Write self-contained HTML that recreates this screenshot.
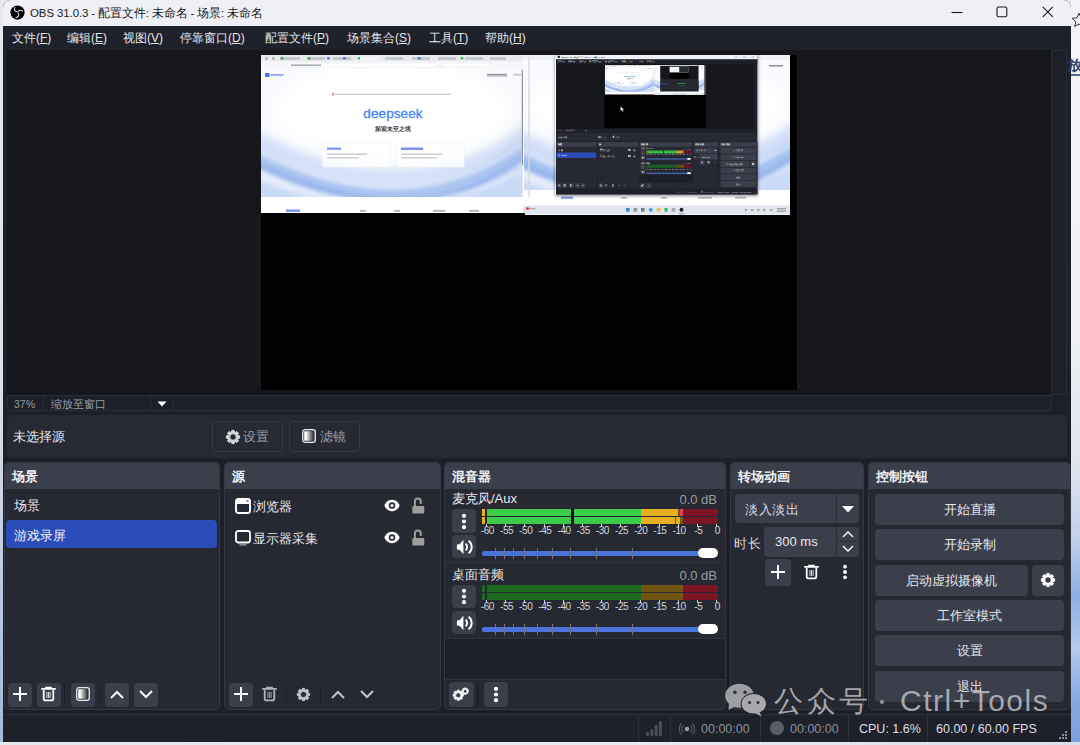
<!DOCTYPE html>
<html><head><meta charset="utf-8">
<style>
*{box-sizing:border-box;margin:0;padding:0}
html,body{width:1080px;height:745px;overflow:hidden;background:linear-gradient(180deg,#e6e8ec 0,#dde2ea 50%,#b9c8de 80%,#a3b8d8 100%);font-family:"Liberation Sans",sans-serif}
.a{position:absolute}
.t{position:absolute;white-space:nowrap}
#deskR{left:1071px;top:0;width:9px;height:745px;background:linear-gradient(180deg,#f4f5f8 0,#eef0f4 45%,#dfe5ee 62%,#c3d2ea 72%,#8eaee2 80%,#b5caec 87%,#86a8e2 94%,#7d9fdd 100%)}
#winbg{left:3px;top:0;width:1068px;height:742px;background:#1e2029;border-radius:8px 8px 3px 3px}
#title{left:3px;top:0;width:1068px;height:26px;background:#eff0f5;border-radius:8px 8px 0 0;color:#1b1b1b;font-size:11.5px}
#menu{left:3px;top:26px;width:1067px;height:23px;background:#1f212a;color:#e4e4ea;font-size:12px}
#menu span{position:absolute;top:4px;white-space:nowrap}
#preview{left:7px;top:50px;width:1044px;height:345px;background:#16171c}
#vscroll{left:1051px;top:50px;width:16px;height:345px;background:#1e2029;border:1px solid #2a2d37}
#zoomrow{left:7px;top:395px;width:1044px;height:16px;border:1px solid #2a2d37;color:#9a9ca6;font-size:10.5px}
#srcbar{left:7px;top:415px;width:1060px;height:43px;background:#272a33;border-radius:6px}
.dock{position:absolute;top:462px;height:248px;background:#262832;border-radius:5px;overflow:hidden;border:1px solid #353844}
.hdr{position:absolute;left:0;top:0;right:0;height:26px;background:#3b3e4b;color:#f2f2f4;font-size:13px;font-weight:bold}
.hdr span{position:absolute;left:7px;top:5px}
.btn{position:absolute;background:#3b3e4b;border-radius:4px}
.cbtn{position:absolute;width:189px;height:31px;background:#3b3e4b;border-radius:4px;color:#e6e6ea;font-size:12.5px;text-align:center;line-height:32px}
#status{left:3px;top:714px;width:1068px;height:28px;background:#1f212a;border-top:1px solid #2e313b;color:#8c8f9a;font-size:12.5px}
.sep{position:absolute;top:0;width:1px;height:28px;background:#2e313b}
.ic{color:#fff}
.lt{color:#e6e6ea;font-size:13px}
.sc{color:#d4d5da;font-size:10px;width:40px;text-align:center;letter-spacing:-0.4px}
.db{color:#9a9ca6;font-size:13px}
.wm{color:rgba(214,214,218,0.72)}
</style></head><body>
<svg width="0" height="0" style="position:absolute">
<defs>
<symbol id="plus" viewBox="0 0 14 14"><path d="M7 0v14M0 7h14" stroke="currentColor" stroke-width="2" fill="none"/></symbol>
<symbol id="trash" viewBox="0 0 16 16"><path d="M1 2.6h14" stroke="currentColor" stroke-width="1.9" fill="none" stroke-linecap="round"/><path d="M5.3 2.2V1h5.4v1.2" stroke="currentColor" stroke-width="1.6" fill="none"/><path d="M2.9 3.6v9.1a2.2 2.2 0 0 0 2.2 2.2h5.8a2.2 2.2 0 0 0 2.2-2.2V3.6" stroke="currentColor" stroke-width="1.9" fill="none"/><path d="M6.3 5.8v6.4M8 5.8v6.4M9.7 5.8v6.4" stroke="currentColor" stroke-width="0.9" fill="none"/></symbol>
<linearGradient id="fg" x1="0" x2="1" y1="0" y2="0"><stop offset="0.18" stop-color="#fff"/><stop offset="0.45" stop-color="#bbb"/><stop offset="1" stop-color="#2a2a2a"/></linearGradient>
<symbol id="filt" viewBox="0 0 14 14"><rect x="0.7" y="0.7" width="12.6" height="12.6" rx="2.2" fill="#3b3e4b" stroke="#e8e8e8" stroke-width="1.3"/><rect x="2.2" y="2.2" width="9.6" height="9.6" rx="0.8" fill="url(#fg)"/></symbol>
<symbol id="up" viewBox="0 0 14 9"><path d="M1 8L7 2l6 6" stroke="currentColor" stroke-width="2" fill="none"/></symbol>
<symbol id="down" viewBox="0 0 14 9"><path d="M1 1l6 6 6-6" stroke="currentColor" stroke-width="2" fill="none"/></symbol>
<symbol id="gear" viewBox="0 0 16 16"><path fill="currentColor" fill-rule="evenodd" stroke="currentColor" stroke-width="1" stroke-linejoin="round" d="M12.71 6.33 L14.60 6.87 L14.60 9.13 L12.71 9.67 L12.51 10.15 L13.47 11.87 L11.87 13.47 L10.15 12.51 L9.67 12.71 L9.13 14.60 L6.87 14.60 L6.33 12.71 L5.85 12.51 L4.13 13.47 L2.53 11.87 L3.49 10.15 L3.29 9.67 L1.40 9.13 L1.40 6.87 L3.29 6.33 L3.49 5.85 L2.53 4.13 L4.13 2.53 L5.85 3.49 L6.33 3.29 L6.87 1.40 L9.13 1.40 L9.67 3.29 L10.15 3.49 L11.87 2.53 L13.47 4.13 L12.51 5.85ZM11.3 8a3.3 3.3 0 1 0 -6.6 0a3.3 3.3 0 1 0 6.6 0z"/></symbol>
<symbol id="eye" viewBox="0 0 16 13"><path d="M8 0.8C4 0.8 1.3 3.8 0.4 6.5 1.3 9.2 4 12.2 8 12.2s6.7-3 7.6-5.7C14.7 3.8 12 0.8 8 0.8z" fill="currentColor"/><circle cx="8" cy="6.5" r="3.2" fill="#262832"/><circle cx="8" cy="6.5" r="1.6" fill="currentColor"/></symbol>
<symbol id="lock" viewBox="0 0 13 17"><rect x="0.3" y="9" width="12" height="7.5" rx="1" fill="currentColor"/><path d="M2.9 10V4.4a2.95 2.95 0 0 1 5.9 0V7" stroke="currentColor" stroke-width="2" fill="none"/></symbol>
<symbol id="dots" viewBox="0 0 6 18"><circle cx="3" cy="3" r="2.2" fill="currentColor"/><circle cx="3" cy="9" r="2.2" fill="currentColor"/><circle cx="3" cy="15" r="2.2" fill="currentColor"/></symbol>
<symbol id="spk" viewBox="0 0 17 16"><path d="M1.3 5.2Q0.2 8 1.3 10.8H3.6L7.4 15.2V0.8L3.6 5.2z" fill="currentColor"/><path d="M9.6 4.6a4.6 4.6 0 0 1 0 6.8" stroke="currentColor" stroke-width="1.9" fill="none"/><path d="M12.6 1.8a7.8 7.8 0 0 1 0 12.4" stroke="currentColor" stroke-width="1.9" fill="none"/></symbol>
<symbol id="brow" viewBox="0 0 16 16"><rect x="1" y="1" width="14" height="14" rx="2.2" fill="none" stroke="currentColor" stroke-width="1.9"/><rect x="1" y="1" width="14" height="5" rx="1.5" fill="currentColor"/><path d="M11.3 1.6l2.2 2.4M13.5 1.6l-2.2 2.4" stroke="#555" stroke-width="0.8"/></symbol>
<symbol id="mon" viewBox="0 0 16 16"><rect x="1" y="1" width="14" height="11.5" rx="2.2" fill="none" stroke="currentColor" stroke-width="1.8"/><path d="M4.5 14.9h7" stroke="currentColor" stroke-width="0.9" opacity=".85"/></symbol>
</defs></svg>
<div id="deskR" class="a"></div>
<div id="winbg" class="a"></div>

<div id="title" class="a">
  <svg class="a" style="left:7px;top:5px" width="15" height="15" viewBox="0 0 16 16"><circle cx="8" cy="8" r="7.6" fill="#000"/><g fill="none" stroke="#e8e8e8" stroke-width="1.1" stroke-linecap="round"><path d="M5.2 2.6a3 3 0 0 0 2.2 4.6"/><path d="M13.3 6.6a3 3 0 0 0-5 .9"/><path d="M6.3 13.4a3 3 0 0 0 2.4-4.8"/></g></svg>
  <svg class="a" style="left:948px;top:6px" width="14" height="14"><path d="M0.5 6.5h11" stroke="#1b1b1b" stroke-width="1.1"/></svg>
  <svg class="a" style="left:993px;top:6px" width="12" height="12"><rect x="1" y="1" width="9.8" height="9.8" rx="1.6" fill="none" stroke="#1b1b1b" stroke-width="1.1"/></svg>
  <svg class="a" style="left:1039px;top:6px" width="12" height="12"><path d="M0.8 0.8l10 10M10.8 0.8l-10 10" stroke="#1b1b1b" stroke-width="1.1"/></svg>
  <span class="t" style="left:27px;top:6px;letter-spacing:-0.12px">OBS 31.0.3 - 配置文件: 未命名 - 场景: 未命名</span>
</div>
<div id="menu" class="a">
  <span style="left:9px">文件(<u>F</u>)</span>
  <span style="left:64px">编辑(<u>E</u>)</span>
  <span style="left:120px">视图(<u>V</u>)</span>
  <span style="left:177px">停靠窗口(<u>D</u>)</span>
  <span style="left:262px">配置文件(<u>P</u>)</span>
  <span style="left:344px">场景集合(<u>S</u>)</span>
  <span style="left:426px">工具(<u>T</u>)</span>
  <span style="left:482px">帮助(<u>H</u>)</span>
</div>

<div id="preview" class="a">
  <div id="shot" class="a" style="left:254px;top:5px;width:536px;height:335px;background:#000;overflow:hidden"><svg class="a" style="left:0;top:0" width="536" height="160" viewBox="0 0 536 160">
<defs>
<filter id="b2" x="-10%" y="-50%" width="120%" height="200%"><feGaussianBlur stdDeviation="2"/></filter>
<filter id="b4" x="-10%" y="-50%" width="120%" height="200%"><feGaussianBlur stdDeviation="4"/></filter>
<filter id="b8" x="-20%" y="-50%" width="140%" height="200%"><feGaussianBlur stdDeviation="9"/></filter>
<clipPath id="cpL"><rect x="0" y="13.5" width="262" height="128.5"/></clipPath>
<clipPath id="cpR"><rect x="263" y="5" width="266" height="130"/></clipPath>
</defs>
<!-- left browser -->
<rect x="0" y="0" width="264" height="158" fill="#fff"/>
<rect x="0" y="0" width="264" height="6.6" fill="#e8eaee"/>
<g fill="#b9bcc4"><rect x="4" y="2" width="3" height="3"/><rect x="11" y="2" width="3" height="3"/></g>
<g fill="#c5c8cf"><rect x="19" y="2" width="20" height="3"/><rect x="46" y="2" width="18" height="3"/><rect x="72" y="2" width="18" height="3"/><rect x="99" y="1.5" width="20" height="4" fill="#f4f5f8"/><rect x="124" y="2" width="18" height="3"/><rect x="151" y="2" width="18" height="3"/><rect x="177" y="2" width="18" height="3"/><rect x="204" y="2" width="18" height="3"/><rect x="229" y="2" width="16" height="3"/></g>
<g fill="#39b54a"><circle cx="21" cy="3.3" r="1.4"/><circle cx="48" cy="3.3" r="1.4"/><circle cx="98" cy="3.3" r="1.2"/><circle cx="201" cy="3.3" r="1.4"/></g>
<g fill="#4c6bf0"><rect x="66" y="2.3" width="3" height="2"/><rect x="82" y="2.3" width="3" height="2"/><rect x="157" y="2" width="2.5" height="2.5"/></g>
<rect x="0" y="6.6" width="264" height="7" fill="#f6f7f9"/>
<rect x="26" y="8" width="150" height="4.2" rx="2" fill="#fff" stroke="#e2e4e8" stroke-width="0.5"/>
<rect x="30" y="9.5" width="30" height="1.4" fill="#9aa0ac"/>
<rect x="180" y="8" width="50" height="4.2" rx="2" fill="#fff" stroke="#e2e4e8" stroke-width="0.5"/>
<g clip-path="url(#cpL)">
<rect x="0" y="13.5" width="262" height="128.5" fill="#f8fafe"/>
<path d="M-10 118 Q150 190 272 100 L272 150 L-10 150Z" fill="#c9daf6" filter="url(#b4)"/>
<path d="M-10 82 Q150 165 272 72" stroke="#d3e1f8" stroke-width="16" fill="none" filter="url(#b4)"/>
<path d="M-10 100 Q150 185 272 88" stroke="#a9c3f0" stroke-width="16" fill="none" filter="url(#b4)"/>
<path d="M-10 106 Q160 190 272 94" stroke="#8aace9" stroke-width="5" fill="none" filter="url(#b2)" opacity=".8"/>
<path d="M-10 93 Q150 176 272 82" stroke="#fff" stroke-width="2" fill="none" filter="url(#b2)" opacity=".7"/>
<path d="M-10 120 Q150 180 272 110" stroke="#fff" stroke-width="3" fill="none" filter="url(#b2)" opacity=".4"/>
<ellipse cx="131" cy="55" rx="120" ry="50" fill="#fff" filter="url(#b8)" opacity=".95"/>
</g>
<rect x="260.5" y="13.5" width="2" height="128" fill="#e4e6ea"/>
<rect x="260.8" y="15" width="1.4" height="95" fill="#8e929a"/>
<g fill="#4f6cf0"><rect x="4" y="18" width="4.5" height="4"/><rect x="9.5" y="19" width="13" height="1.8" opacity=".6"/></g>
<rect x="226" y="18.8" width="20" height="1.8" fill="#555" opacity=".6"/><rect x="226" y="21" width="20" height="0.5" fill="#555" opacity=".5"/>
<rect x="252" y="18.8" width="8" height="1.8" fill="#999" opacity=".5"/>
<rect x="74" y="38.6" width="116" height="1.5" fill="#8a8f9c" opacity=".4"/>
<rect x="71" y="38" width="2" height="2.5" fill="#e25a4a" opacity=".7"/>
<text x="132" y="63" text-anchor="middle" font-family="Liberation Sans" font-size="13.5" fill="#3d86f5" stroke="#3d86f5" stroke-width="0.3" letter-spacing="0.1">deepseek</text>
<text x="132" y="75.5" text-anchor="middle" font-size="6.4" font-weight="bold" fill="#2c3039" opacity=".95">探索未至之境</text>
<g>
<rect x="61" y="87.7" width="68" height="24.7" rx="3" fill="#fff" opacity=".8" stroke="#e3e9f5" stroke-width=".6"/>
<rect x="135" y="87.7" width="68.5" height="24.7" rx="3" fill="#fff" opacity=".8" stroke="#e3e9f5" stroke-width=".6"/>
<rect x="66" y="92.6" width="14" height="2.2" fill="#5470ee" opacity=".75"/>
<rect x="140" y="92.5" width="22" height="2.4" fill="#5470ee" opacity=".8"/>
<rect x="66" y="98.6" width="40" height="1.2" fill="#7a7f8c" opacity=".45"/><rect x="66" y="102.2" width="32" height="1.2" fill="#7a7f8c" opacity=".45"/>
<rect x="140" y="98.6" width="42" height="1.2" fill="#7a7f8c" opacity=".45"/><rect x="140" y="102.2" width="36" height="1.2" fill="#7a7f8c" opacity=".45"/>
</g>
<g fill="#6d7280" opacity=".6"><rect x="99" y="155" width="6" height="1.6"/><rect x="133" y="155" width="6" height="1.6"/><rect x="172" y="155" width="12" height="1.6"/><rect x="208" y="155" width="10" height="1.6"/></g>
<rect x="25" y="154.5" width="14" height="2.4" fill="#4f6cf0" opacity=".75"/>
<!-- right screenshot -->
<rect x="262" y="-1" width="274" height="161" fill="#fff"/>
<rect x="262" y="-1" width="268" height="6" fill="#eef0f3"/>
<rect x="262" y="5" width="268" height="4" fill="#f8f9fb"/>
<g clip-path="url(#cpR)">
<rect x="263" y="5" width="266" height="130" fill="#f8fafe"/>
<path d="M250 118 Q410 190 545 100 L545 150 L250 150Z" fill="#c9daf6" filter="url(#b4)"/>
<path d="M250 80 Q410 165 545 68" stroke="#cfdef8" stroke-width="16" fill="none" filter="url(#b4)"/>
<path d="M250 98 Q410 185 545 86" stroke="#a3bff0" stroke-width="16" fill="none" filter="url(#b4)"/>
<path d="M250 104 Q420 190 545 92" stroke="#86a9e8" stroke-width="5" fill="none" filter="url(#b2)" opacity=".8"/>
<path d="M250 90 Q410 176 545 80" stroke="#fff" stroke-width="2" fill="none" filter="url(#b2)" opacity=".7"/>
<ellipse cx="396" cy="50" rx="130" ry="45" fill="#fff" filter="url(#b8)"/>
</g>
<rect x="263" y="135" width="266" height="15" fill="#fff"/>
<rect x="267" y="2" width="2" height="140" fill="#d6d9df" opacity=".7"/>
<g fill="#6d7280" opacity=".55"><rect x="360" y="142" width="6" height="1.5"/><rect x="400" y="142" width="6" height="1.5"/><rect x="437" y="142" width="14" height="1.5"/><rect x="474" y="142" width="11" height="1.5"/></g>
<rect x="300" y="141.6" width="12" height="2.2" fill="#4f6cf0" opacity=".7"/>
<rect x="508" y="10" width="14" height="1.6" fill="#555" opacity=".6"/>
<rect x="262" y="150.5" width="268" height="9" fill="#e1e6ef"/>
<g>
<rect x="365" y="153" width="3.6" height="3.6" fill="#3a86dc"/>
<rect x="372.5" y="153" width="3.6" height="3.6" fill="#5c606a" opacity=".6"/>
<rect x="380" y="153" width="3.6" height="3.6" fill="#33363e" opacity=".6"/>
<circle cx="389.8" cy="154.8" r="1.9" fill="#2aa0e0"/>
<rect x="395.8" y="153.2" width="3.8" height="3.2" fill="#f0bd3a"/>
<rect x="403.5" y="153" width="3" height="3.6" fill="#36b552"/>
<rect x="410.8" y="153" width="3.4" height="3.6" fill="#667" opacity=".5"/>
<circle cx="420.5" cy="154.8" r="2" fill="#222"/>
<rect x="418" y="158.4" width="5" height="0.8" fill="#5b8ee8"/>
</g>
<g fill="#666" opacity=".5"><rect x="484" y="154" width="2" height="2"/><rect x="490" y="154" width="2.5" height="2"/><rect x="496" y="154" width="2.5" height="2"/><rect x="502" y="154" width="2.5" height="2"/><rect x="509" y="154" width="2.5" height="2"/><rect x="516" y="153" width="9" height="1.5"/><rect x="516" y="155.5" width="9" height="1.5"/></g>
<circle cx="266.5" cy="153.5" r="1.6" fill="#e0483f"/>
<rect x="268.5" y="153" width="6" height="1.4" fill="#777" opacity=".5"/>
<rect x="0" y="158" width="264" height="2" fill="#000"/>
<rect x="529" y="-1" width="7" height="161" fill="#000"/>
</svg>
<div class="a" style="left:0;top:160px;width:536px;height:180px;background:#000"></div>
<div class="a" style="left:294px;top:-1px;width:203px;height:141px;box-shadow:0 1px 3px rgba(0,0,0,.45)"></div>
<div class="a" style="left:0;top:0;width:1080px;height:745px;transform:translate(295px,-0.5px) scale(0.18866) translate(-3px,0);transform-origin:0 0"><div id="winbg" class="a"></div>

<div id="title" class="a">
  <svg class="a" style="left:7px;top:5px" width="15" height="15" viewBox="0 0 16 16"><circle cx="8" cy="8" r="7.6" fill="#000"/><g fill="none" stroke="#e8e8e8" stroke-width="1.1" stroke-linecap="round"><path d="M5.2 2.6a3 3 0 0 0 2.2 4.6"/><path d="M13.3 6.6a3 3 0 0 0-5 .9"/><path d="M6.3 13.4a3 3 0 0 0 2.4-4.8"/></g></svg>
  <svg class="a" style="left:948px;top:6px" width="14" height="14"><path d="M0.5 6.5h11" stroke="#1b1b1b" stroke-width="1.1"/></svg>
  <svg class="a" style="left:993px;top:6px" width="12" height="12"><rect x="1" y="1" width="9.8" height="9.8" rx="1.6" fill="none" stroke="#1b1b1b" stroke-width="1.1"/></svg>
  <svg class="a" style="left:1039px;top:6px" width="12" height="12"><path d="M0.8 0.8l10 10M10.8 0.8l-10 10" stroke="#1b1b1b" stroke-width="1.1"/></svg>
  <span class="t" style="left:27px;top:6px;letter-spacing:-0.12px">OBS 31.0.3 - 配置文件: 未命名 - 场景: 未命名</span>
</div>
<div id="menu" class="a">
  <span style="left:9px">文件(<u>F</u>)</span>
  <span style="left:64px">编辑(<u>E</u>)</span>
  <span style="left:120px">视图(<u>V</u>)</span>
  <span style="left:177px">停靠窗口(<u>D</u>)</span>
  <span style="left:262px">配置文件(<u>P</u>)</span>
  <span style="left:344px">场景集合(<u>S</u>)</span>
  <span style="left:426px">工具(<u>T</u>)</span>
  <span style="left:482px">帮助(<u>H</u>)</span>
</div>

<div id="preview" class="a">
  <div id="shot" class="a" style="left:254px;top:5px;width:536px;height:335px;background:#000;overflow:hidden"><svg class="a" style="left:0;top:0" width="536" height="160" viewBox="0 0 536 160">
<defs>
<filter id="b2" x="-10%" y="-50%" width="120%" height="200%"><feGaussianBlur stdDeviation="2"/></filter>
<filter id="b4" x="-10%" y="-50%" width="120%" height="200%"><feGaussianBlur stdDeviation="4"/></filter>
<filter id="b8" x="-20%" y="-50%" width="140%" height="200%"><feGaussianBlur stdDeviation="9"/></filter>
<clipPath id="cpL"><rect x="0" y="13.5" width="262" height="128.5"/></clipPath>
<clipPath id="cpR"><rect x="263" y="5" width="266" height="130"/></clipPath>
</defs>
<!-- left browser -->
<rect x="0" y="0" width="264" height="158" fill="#fff"/>
<rect x="0" y="0" width="264" height="6.6" fill="#e8eaee"/>
<g fill="#b9bcc4"><rect x="4" y="2" width="3" height="3"/><rect x="11" y="2" width="3" height="3"/></g>
<g fill="#c5c8cf"><rect x="19" y="2" width="20" height="3"/><rect x="46" y="2" width="18" height="3"/><rect x="72" y="2" width="18" height="3"/><rect x="99" y="1.5" width="20" height="4" fill="#f4f5f8"/><rect x="124" y="2" width="18" height="3"/><rect x="151" y="2" width="18" height="3"/><rect x="177" y="2" width="18" height="3"/><rect x="204" y="2" width="18" height="3"/><rect x="229" y="2" width="16" height="3"/></g>
<g fill="#39b54a"><circle cx="21" cy="3.3" r="1.4"/><circle cx="48" cy="3.3" r="1.4"/><circle cx="98" cy="3.3" r="1.2"/><circle cx="201" cy="3.3" r="1.4"/></g>
<g fill="#4c6bf0"><rect x="66" y="2.3" width="3" height="2"/><rect x="82" y="2.3" width="3" height="2"/><rect x="157" y="2" width="2.5" height="2.5"/></g>
<rect x="0" y="6.6" width="264" height="7" fill="#f6f7f9"/>
<rect x="26" y="8" width="150" height="4.2" rx="2" fill="#fff" stroke="#e2e4e8" stroke-width="0.5"/>
<rect x="30" y="9.5" width="30" height="1.4" fill="#9aa0ac"/>
<rect x="180" y="8" width="50" height="4.2" rx="2" fill="#fff" stroke="#e2e4e8" stroke-width="0.5"/>
<g clip-path="url(#cpL)">
<rect x="0" y="13.5" width="262" height="128.5" fill="#f8fafe"/>
<path d="M-10 118 Q150 190 272 100 L272 150 L-10 150Z" fill="#c9daf6" filter="url(#b4)"/>
<path d="M-10 82 Q150 165 272 72" stroke="#d3e1f8" stroke-width="16" fill="none" filter="url(#b4)"/>
<path d="M-10 100 Q150 185 272 88" stroke="#a9c3f0" stroke-width="16" fill="none" filter="url(#b4)"/>
<path d="M-10 106 Q160 190 272 94" stroke="#8aace9" stroke-width="5" fill="none" filter="url(#b2)" opacity=".8"/>
<path d="M-10 93 Q150 176 272 82" stroke="#fff" stroke-width="2" fill="none" filter="url(#b2)" opacity=".7"/>
<path d="M-10 120 Q150 180 272 110" stroke="#fff" stroke-width="3" fill="none" filter="url(#b2)" opacity=".4"/>
<ellipse cx="131" cy="55" rx="120" ry="50" fill="#fff" filter="url(#b8)" opacity=".95"/>
</g>
<rect x="260.5" y="13.5" width="2" height="128" fill="#e4e6ea"/>
<rect x="260.8" y="15" width="1.4" height="95" fill="#8e929a"/>
<g fill="#4f6cf0"><rect x="4" y="18" width="4.5" height="4"/><rect x="9.5" y="19" width="13" height="1.8" opacity=".6"/></g>
<rect x="226" y="18.8" width="20" height="1.8" fill="#555" opacity=".6"/><rect x="226" y="21" width="20" height="0.5" fill="#555" opacity=".5"/>
<rect x="252" y="18.8" width="8" height="1.8" fill="#999" opacity=".5"/>
<rect x="74" y="38.6" width="116" height="1.5" fill="#8a8f9c" opacity=".4"/>
<rect x="71" y="38" width="2" height="2.5" fill="#e25a4a" opacity=".7"/>
<text x="132" y="63" text-anchor="middle" font-family="Liberation Sans" font-size="13.5" fill="#3d86f5" stroke="#3d86f5" stroke-width="0.3" letter-spacing="0.1">deepseek</text>
<text x="132" y="75.5" text-anchor="middle" font-size="6.4" font-weight="bold" fill="#2c3039" opacity=".95">探索未至之境</text>
<g>
<rect x="61" y="87.7" width="68" height="24.7" rx="3" fill="#fff" opacity=".8" stroke="#e3e9f5" stroke-width=".6"/>
<rect x="135" y="87.7" width="68.5" height="24.7" rx="3" fill="#fff" opacity=".8" stroke="#e3e9f5" stroke-width=".6"/>
<rect x="66" y="92.6" width="14" height="2.2" fill="#5470ee" opacity=".75"/>
<rect x="140" y="92.5" width="22" height="2.4" fill="#5470ee" opacity=".8"/>
<rect x="66" y="98.6" width="40" height="1.2" fill="#7a7f8c" opacity=".45"/><rect x="66" y="102.2" width="32" height="1.2" fill="#7a7f8c" opacity=".45"/>
<rect x="140" y="98.6" width="42" height="1.2" fill="#7a7f8c" opacity=".45"/><rect x="140" y="102.2" width="36" height="1.2" fill="#7a7f8c" opacity=".45"/>
</g>
<g fill="#6d7280" opacity=".6"><rect x="99" y="155" width="6" height="1.6"/><rect x="133" y="155" width="6" height="1.6"/><rect x="172" y="155" width="12" height="1.6"/><rect x="208" y="155" width="10" height="1.6"/></g>
<rect x="25" y="154.5" width="14" height="2.4" fill="#4f6cf0" opacity=".75"/>
<!-- right screenshot -->
<rect x="262" y="-1" width="274" height="161" fill="#fff"/>
<rect x="262" y="-1" width="268" height="6" fill="#eef0f3"/>
<rect x="262" y="5" width="268" height="4" fill="#f8f9fb"/>
<g clip-path="url(#cpR)">
<rect x="263" y="5" width="266" height="130" fill="#f8fafe"/>
<path d="M250 118 Q410 190 545 100 L545 150 L250 150Z" fill="#c9daf6" filter="url(#b4)"/>
<path d="M250 80 Q410 165 545 68" stroke="#cfdef8" stroke-width="16" fill="none" filter="url(#b4)"/>
<path d="M250 98 Q410 185 545 86" stroke="#a3bff0" stroke-width="16" fill="none" filter="url(#b4)"/>
<path d="M250 104 Q420 190 545 92" stroke="#86a9e8" stroke-width="5" fill="none" filter="url(#b2)" opacity=".8"/>
<path d="M250 90 Q410 176 545 80" stroke="#fff" stroke-width="2" fill="none" filter="url(#b2)" opacity=".7"/>
<ellipse cx="396" cy="50" rx="130" ry="45" fill="#fff" filter="url(#b8)"/>
</g>
<rect x="263" y="135" width="266" height="15" fill="#fff"/>
<rect x="267" y="2" width="2" height="140" fill="#d6d9df" opacity=".7"/>
<g fill="#6d7280" opacity=".55"><rect x="360" y="142" width="6" height="1.5"/><rect x="400" y="142" width="6" height="1.5"/><rect x="437" y="142" width="14" height="1.5"/><rect x="474" y="142" width="11" height="1.5"/></g>
<rect x="300" y="141.6" width="12" height="2.2" fill="#4f6cf0" opacity=".7"/>
<rect x="508" y="10" width="14" height="1.6" fill="#555" opacity=".6"/>
<rect x="262" y="150.5" width="268" height="9" fill="#e1e6ef"/>
<g>
<rect x="365" y="153" width="3.6" height="3.6" fill="#3a86dc"/>
<rect x="372.5" y="153" width="3.6" height="3.6" fill="#5c606a" opacity=".6"/>
<rect x="380" y="153" width="3.6" height="3.6" fill="#33363e" opacity=".6"/>
<circle cx="389.8" cy="154.8" r="1.9" fill="#2aa0e0"/>
<rect x="395.8" y="153.2" width="3.8" height="3.2" fill="#f0bd3a"/>
<rect x="403.5" y="153" width="3" height="3.6" fill="#36b552"/>
<rect x="410.8" y="153" width="3.4" height="3.6" fill="#667" opacity=".5"/>
<circle cx="420.5" cy="154.8" r="2" fill="#222"/>
<rect x="418" y="158.4" width="5" height="0.8" fill="#5b8ee8"/>
</g>
<g fill="#666" opacity=".5"><rect x="484" y="154" width="2" height="2"/><rect x="490" y="154" width="2.5" height="2"/><rect x="496" y="154" width="2.5" height="2"/><rect x="502" y="154" width="2.5" height="2"/><rect x="509" y="154" width="2.5" height="2"/><rect x="516" y="153" width="9" height="1.5"/><rect x="516" y="155.5" width="9" height="1.5"/></g>
<circle cx="266.5" cy="153.5" r="1.6" fill="#e0483f"/>
<rect x="268.5" y="153" width="6" height="1.4" fill="#777" opacity=".5"/>
<rect x="0" y="158" width="264" height="2" fill="#000"/>
<rect x="529" y="-1" width="7" height="161" fill="#000"/>
</svg>
<div class="a" style="left:0;top:160px;width:536px;height:180px;background:#000"></div>
<div class="a" style="left:294px;top:-1px;width:203px;height:141px;box-shadow:0 1px 3px rgba(0,0,0,.45)"></div>
<div class="a" style="left:295px;top:0;width:202px;height:140px;background:#1e2029">
<div class="a" style="left:0;top:0;width:202px;height:5px;background:#eff0f5"></div>
<div class="a" style="left:1px;top:9px;width:197px;height:65px;background:#16171c"></div>
<div class="a" style="left:49px;top:10px;width:101px;height:63px;background:#000"></div>
<div class="a" style="left:49px;top:10px;width:100px;height:30px;background:#f2f5fc"></div>
<div class="a" style="left:100px;top:10px;width:50px;height:30px;background:#2a2d36"></div>
<div class="a" style="left:1px;top:78px;width:200px;height:8px;background:#272a33"></div>
<div class="a" style="left:0;top:87px;width:41px;height:47px;background:#262832"></div>
<div class="a" style="left:42px;top:87px;width:41px;height:47px;background:#262832"></div>
<div class="a" style="left:83px;top:87px;width:53px;height:47px;background:#262832"></div>
<div class="a" style="left:137px;top:87px;width:25px;height:47px;background:#262832"></div>
<div class="a" style="left:163px;top:87px;width:39px;height:47px;background:#262832"></div>
<div class="a" style="left:1px;top:98px;width:40px;height:5px;background:#2a4cb8"></div>
<div class="a" style="left:90px;top:96px;width:45px;height:3px;background:#3bcd49"></div>
<div class="a" style="left:90px;top:110px;width:45px;height:3px;background:#1b6a20"></div>
</div>
<svg class="a" style="left:358.5px;top:51px" width="5" height="6"><path d="M0.5 0.5v4.5l1.2-1 1 1.8.8-.4-.9-1.7h1.6z" fill="#fff" stroke="#333" stroke-width=".3"/></svg>
</div>
</div>
<div id="vscroll" class="a"></div>
<div id="zoomrow" class="a">
  <span class="t" style="left:6px;top:1.5px">37%</span>
  <div class="a" style="left:35px;top:0;width:1px;height:14px;background:#2a2d37"></div>
  <span class="t" style="left:43px;top:1.5px">缩放至窗口</span>
  <div class="a" style="left:142px;top:0;width:1px;height:14px;background:#2a2d37"></div>
  <div class="a" style="left:165px;top:0;width:1px;height:14px;background:#2a2d37"></div>
  <svg class="a" style="left:149px;top:5px" width="10" height="6"><path d="M0.5 0.5h9L5 5.5z" fill="#fff"/></svg>
</div>

<div id="srcbar" class="a"></div>
<span class="t lt" style="left:13px;top:428px;color:#e8e8ec">未选择源</span>
<div class="a" style="left:212px;top:421px;width:71px;height:31px;border:1px solid #363946;border-radius:4px"></div>
<svg class="a" style="left:225px;top:428.5px;color:#d6d7dc" width="16" height="16"><use href="#gear"/></svg>
<span class="t" style="left:243px;top:429px;color:#9a9ca6;font-size:12.5px">设置</span>
<div class="a" style="left:289px;top:421px;width:71px;height:31px;border:1px solid #363946;border-radius:4px"></div>
<svg class="a" style="left:302px;top:429px" width="14" height="14"><use href="#filt"/></svg>
<span class="t" style="left:320px;top:429px;color:#9a9ca6;font-size:12.5px">滤镜</span>

<!-- Scenes -->
<div class="dock" style="left:4px;width:216px"><div class="hdr"><span>场景</span></div></div>
<span class="t lt" style="left:14px;top:497px">场景</span>
<div class="a" style="left:6px;top:520px;width:211px;height:28px;background:#2a4cb8;border-radius:4px"></div>
<span class="t lt" style="left:14px;top:527px;color:#f4f4f8">游戏录屏</span>
<div class="btn" style="left:8px;top:683px;width:24px;height:24px"></div>
<svg class="a ic" style="left:13px;top:687px" width="14" height="14"><use href="#plus"/></svg>
<div class="btn" style="left:37px;top:683px;width:24px;height:24px"></div>
<svg class="a ic" style="left:41px;top:686px" width="15" height="16"><use href="#trash"/></svg>
<div class="a" style="left:64px;top:685px;width:1px;height:18px;background:#1c1e26"></div>
<div class="btn" style="left:71px;top:683px;width:24px;height:24px"></div>
<svg class="a" style="left:76px;top:687px" width="14" height="14"><use href="#filt"/></svg>
<div class="a" style="left:99px;top:685px;width:1px;height:18px;background:#1c1e26"></div>
<div class="btn" style="left:105px;top:683px;width:24px;height:24px"></div>
<svg class="a ic" style="left:110px;top:690px" width="14" height="9"><use href="#up"/></svg>
<div class="btn" style="left:134px;top:683px;width:24px;height:24px"></div>
<svg class="a ic" style="left:139px;top:690px" width="14" height="9"><use href="#down"/></svg>

<!-- Sources -->
<div class="dock" style="left:224px;width:217px"><div class="hdr"><span>源</span></div></div>
<svg class="a ic" style="left:235px;top:498px" width="16" height="16"><use href="#brow"/></svg>
<span class="t lt" style="left:253px;top:498px">浏览器</span>
<svg class="a ic" style="left:384px;top:499px" width="16" height="13"><use href="#eye"/></svg>
<svg class="a" style="left:412px;top:497px;color:#9e9d99" width="13" height="17"><use href="#lock"/></svg>
<svg class="a ic" style="left:235px;top:530px" width="16" height="16"><use href="#mon"/></svg>
<span class="t lt" style="left:253px;top:530px">显示器采集</span>
<svg class="a ic" style="left:384px;top:531px" width="16" height="13"><use href="#eye"/></svg>
<svg class="a" style="left:412px;top:529px;color:#9e9d99" width="13" height="17"><use href="#lock"/></svg>
<div class="btn" style="left:229px;top:683px;width:24px;height:24px"></div>
<svg class="a ic" style="left:234px;top:687px" width="14" height="14"><use href="#plus"/></svg>
<svg class="a" style="left:262px;top:686px;color:#b5b6bc" width="15" height="16"><use href="#trash"/></svg>
<div class="a" style="left:286px;top:685px;width:1px;height:18px;background:#1c1e26"></div>
<svg class="a" style="left:296px;top:687px;color:#c4c5ca" width="15" height="15"><use href="#gear"/></svg>
<div class="a" style="left:320px;top:685px;width:1px;height:18px;background:#1c1e26"></div>
<svg class="a" style="left:331px;top:690px;color:#c4c5ca" width="14" height="9"><use href="#up"/></svg>
<svg class="a" style="left:360px;top:690px;color:#c4c5ca" width="14" height="9"><use href="#down"/></svg>

<!-- Mixer -->
<div class="dock" style="left:444px;width:282px"><div class="hdr"><span>混音器</span></div></div>
<div class="a" style="left:445px;top:562px;width:280px;height:1px;background:#30333e"></div>
<div class="a" style="left:445px;top:638px;width:280px;height:42px;background:#1e2029;border-top:1px solid #30333e;border-bottom:1px solid #30333e"></div>
<span class="t lt" style="left:452px;top:490px">麦克风/Aux</span>
<span class="t db" style="left:650px;top:492px;width:67px;text-align:right">0.0 dB</span>
<div class="btn" style="left:452px;top:509px;width:24px;height:24px"></div>
<svg class="a ic" style="left:461px;top:513px" width="6" height="17"><use href="#dots"/></svg>
<div class="btn" style="left:452px;top:535px;width:24px;height:23px"></div>
<svg class="a ic" style="left:455.5px;top:539px" width="17" height="16"><use href="#spk"/></svg>
<div class="a" style="left:482px;top:509px;width:3px;height:7px;background:#e6b022"></div>
<div class="a" style="left:482px;top:517px;width:3px;height:7px;background:#e6b022"></div>
<div class="a" style="left:487px;top:509px;width:154px;height:7px;background:#3bcd49"></div>
<div class="a" style="left:641px;top:509px;width:36.5px;height:7px;background:#e6b022"></div>
<div class="a" style="left:677.5px;top:509px;width:2.5px;height:7px;background:#6c5b0c"></div>
<div class="a" style="left:680px;top:509px;width:3px;height:7px;background:#e8405c"></div>
<div class="a" style="left:683px;top:509px;width:35px;height:7px;background:#7b1424"></div>
<div class="a" style="left:487px;top:517px;width:154px;height:7px;background:#3bcd49"></div>
<div class="a" style="left:641px;top:517px;width:34px;height:7px;background:#e6b022"></div>
<div class="a" style="left:675px;top:517px;width:1px;height:7px;background:#6c5b0c"></div>
<div class="a" style="left:676px;top:517px;width:4px;height:7px;background:#e6b022"></div>
<div class="a" style="left:680px;top:517px;width:3px;height:7px;background:#6c5b0c"></div>
<div class="a" style="left:683px;top:517px;width:35px;height:7px;background:#7b1424"></div>
<div class="a" style="left:571px;top:509px;width:3px;height:15px;background:#000"></div>
<div class="a" style="left:486.1px;top:524px;width:1px;height:3px;background:#d0d1d6"></div>
<span class="t sc" style="left:467.4px;top:525px">-60</span>
<div class="a" style="left:505.3px;top:524px;width:1px;height:3px;background:#d0d1d6"></div>
<span class="t sc" style="left:486.6px;top:525px">-55</span>
<div class="a" style="left:524.4px;top:524px;width:1px;height:3px;background:#d0d1d6"></div>
<span class="t sc" style="left:505.7px;top:525px">-50</span>
<div class="a" style="left:543.6px;top:524px;width:1px;height:3px;background:#d0d1d6"></div>
<span class="t sc" style="left:524.9px;top:525px">-45</span>
<div class="a" style="left:562.8px;top:524px;width:1px;height:3px;background:#d0d1d6"></div>
<span class="t sc" style="left:544.1px;top:525px">-40</span>
<div class="a" style="left:582.0px;top:524px;width:1px;height:3px;background:#d0d1d6"></div>
<span class="t sc" style="left:563.3px;top:525px">-35</span>
<div class="a" style="left:601.1px;top:524px;width:1px;height:3px;background:#d0d1d6"></div>
<span class="t sc" style="left:582.4px;top:525px">-30</span>
<div class="a" style="left:620.3px;top:524px;width:1px;height:3px;background:#d0d1d6"></div>
<span class="t sc" style="left:601.6px;top:525px">-25</span>
<div class="a" style="left:639.5px;top:524px;width:1px;height:3px;background:#d0d1d6"></div>
<span class="t sc" style="left:620.8px;top:525px">-20</span>
<div class="a" style="left:658.6px;top:524px;width:1px;height:3px;background:#d0d1d6"></div>
<span class="t sc" style="left:639.9px;top:525px">-15</span>
<div class="a" style="left:677.8px;top:524px;width:1px;height:3px;background:#d0d1d6"></div>
<span class="t sc" style="left:659.1px;top:525px">-10</span>
<div class="a" style="left:697.0px;top:524px;width:1px;height:3px;background:#d0d1d6"></div>
<span class="t sc" style="left:678.3px;top:525px">-5</span>
<div class="a" style="left:716.1px;top:524px;width:1px;height:3px;background:#d0d1d6"></div>
<span class="t sc" style="left:697.4px;top:525px">0</span>
<div class="a" style="left:481.5px;top:551px;width:230px;height:4.5px;background:#4a74dc;border-radius:2px"></div>
<div class="a" style="left:495.4px;top:548px;width:1px;height:11px;background:#6e717c"></div>
<div class="a" style="left:504.2px;top:548px;width:1px;height:11px;background:#6e717c"></div>
<div class="a" style="left:513.0px;top:548px;width:1px;height:11px;background:#6e717c"></div>
<div class="a" style="left:523.9px;top:548px;width:1px;height:11px;background:#6e717c"></div>
<div class="a" style="left:537.0px;top:548px;width:1px;height:11px;background:#6e717c"></div>
<div class="a" style="left:551.6px;top:548px;width:1px;height:11px;background:#6e717c"></div>
<div class="a" style="left:569.9px;top:548px;width:1px;height:11px;background:#6e717c"></div>
<div class="a" style="left:595.7px;top:548px;width:1px;height:11px;background:#6e717c"></div>
<div class="a" style="left:631.8px;top:548px;width:1px;height:11px;background:#6e717c"></div>
<div class="a" style="left:698px;top:548px;width:20px;height:10px;background:#fff;border-radius:5px"></div>
<span class="t lt" style="left:452px;top:566px">桌面音频</span>
<span class="t db" style="left:650px;top:568px;width:67px;text-align:right">0.0 dB</span>
<div class="btn" style="left:452px;top:585px;width:24px;height:23px"></div>
<svg class="a ic" style="left:461px;top:588px" width="6" height="17"><use href="#dots"/></svg>
<div class="btn" style="left:452px;top:611px;width:24px;height:23px"></div>
<svg class="a ic" style="left:455.5px;top:614.5px" width="17" height="16"><use href="#spk"/></svg>
<div class="a" style="left:482px;top:585px;width:3px;height:7px;background:#1b6a20"></div>
<div class="a" style="left:487px;top:585px;width:154px;height:7px;background:#1b6a20"></div>
<div class="a" style="left:641px;top:585px;width:42px;height:7px;background:#6f5412"></div>
<div class="a" style="left:683px;top:585px;width:35px;height:7px;background:#7b1424"></div>
<div class="a" style="left:482px;top:593px;width:3px;height:7px;background:#1b6a20"></div>
<div class="a" style="left:487px;top:593px;width:154px;height:7px;background:#1b6a20"></div>
<div class="a" style="left:641px;top:593px;width:42px;height:7px;background:#6f5412"></div>
<div class="a" style="left:683px;top:593px;width:35px;height:7px;background:#7b1424"></div>
<div class="a" style="left:486.1px;top:600px;width:1px;height:3px;background:#d0d1d6"></div>
<span class="t sc" style="left:467.4px;top:601px">-60</span>
<div class="a" style="left:505.3px;top:600px;width:1px;height:3px;background:#d0d1d6"></div>
<span class="t sc" style="left:486.6px;top:601px">-55</span>
<div class="a" style="left:524.4px;top:600px;width:1px;height:3px;background:#d0d1d6"></div>
<span class="t sc" style="left:505.7px;top:601px">-50</span>
<div class="a" style="left:543.6px;top:600px;width:1px;height:3px;background:#d0d1d6"></div>
<span class="t sc" style="left:524.9px;top:601px">-45</span>
<div class="a" style="left:562.8px;top:600px;width:1px;height:3px;background:#d0d1d6"></div>
<span class="t sc" style="left:544.1px;top:601px">-40</span>
<div class="a" style="left:582.0px;top:600px;width:1px;height:3px;background:#d0d1d6"></div>
<span class="t sc" style="left:563.3px;top:601px">-35</span>
<div class="a" style="left:601.1px;top:600px;width:1px;height:3px;background:#d0d1d6"></div>
<span class="t sc" style="left:582.4px;top:601px">-30</span>
<div class="a" style="left:620.3px;top:600px;width:1px;height:3px;background:#d0d1d6"></div>
<span class="t sc" style="left:601.6px;top:601px">-25</span>
<div class="a" style="left:639.5px;top:600px;width:1px;height:3px;background:#d0d1d6"></div>
<span class="t sc" style="left:620.8px;top:601px">-20</span>
<div class="a" style="left:658.6px;top:600px;width:1px;height:3px;background:#d0d1d6"></div>
<span class="t sc" style="left:639.9px;top:601px">-15</span>
<div class="a" style="left:677.8px;top:600px;width:1px;height:3px;background:#d0d1d6"></div>
<span class="t sc" style="left:659.1px;top:601px">-10</span>
<div class="a" style="left:697.0px;top:600px;width:1px;height:3px;background:#d0d1d6"></div>
<span class="t sc" style="left:678.3px;top:601px">-5</span>
<div class="a" style="left:716.1px;top:600px;width:1px;height:3px;background:#d0d1d6"></div>
<span class="t sc" style="left:697.4px;top:601px">0</span>
<div class="a" style="left:481.5px;top:627px;width:230px;height:4.5px;background:#4a74dc;border-radius:2px"></div>
<div class="a" style="left:495.4px;top:624px;width:1px;height:11px;background:#6e717c"></div>
<div class="a" style="left:504.2px;top:624px;width:1px;height:11px;background:#6e717c"></div>
<div class="a" style="left:513.0px;top:624px;width:1px;height:11px;background:#6e717c"></div>
<div class="a" style="left:523.9px;top:624px;width:1px;height:11px;background:#6e717c"></div>
<div class="a" style="left:537.0px;top:624px;width:1px;height:11px;background:#6e717c"></div>
<div class="a" style="left:551.6px;top:624px;width:1px;height:11px;background:#6e717c"></div>
<div class="a" style="left:569.9px;top:624px;width:1px;height:11px;background:#6e717c"></div>
<div class="a" style="left:595.7px;top:624px;width:1px;height:11px;background:#6e717c"></div>
<div class="a" style="left:631.8px;top:624px;width:1px;height:11px;background:#6e717c"></div>
<div class="a" style="left:698px;top:624px;width:20px;height:10px;background:#fff;border-radius:5px"></div>
<div class="btn" style="left:449px;top:682px;width:25px;height:25px"></div>
<svg class="a ic" style="left:452.2px;top:689.4px" width="12.5" height="12.5"><use href="#gear"/></svg>
<svg class="a ic" style="left:461.4px;top:686.6px" width="8.4" height="8.4"><use href="#gear"/></svg>
<div class="a" style="left:477px;top:685px;width:2px;height:20px;background:#1e2029"></div>
<div class="btn" style="left:484px;top:682px;width:24px;height:25px"></div>
<svg class="a ic" style="left:493px;top:686px" width="6" height="17"><use href="#dots"/></svg>

<!-- Transitions -->
<div class="dock" style="left:730px;width:134px"><div class="hdr"><span>转场动画</span></div></div>
<div class="btn" style="left:735px;top:494px;width:124px;height:29px"></div>
<div class="a" style="left:836px;top:494px;width:1px;height:29px;background:#2b2d37"></div>
<span class="t lt" style="left:745px;top:501px;letter-spacing:0.5px;color:#dcdce2">淡入淡出</span>
<svg class="a" style="left:842px;top:506px" width="12" height="7"><path d="M0 0h12L6 6.5z" fill="#fff"/></svg>
<span class="t lt" style="left:734px;top:535px;letter-spacing:1px;color:#dcdce2">时长</span>
<div class="btn" style="left:764px;top:527px;width:95px;height:30px"></div>
<div class="a" style="left:836px;top:527px;width:1px;height:30px;background:#2b2d37"></div>
<div class="a" style="left:837px;top:541px;width:22px;height:1px;background:#2b2d37"></div>
<span class="t" style="left:775px;top:534px;color:#e8e8ec;font-size:13px">300 ms</span>
<svg class="a" style="left:842px;top:531px" width="12" height="7"><path d="M1 6l5-5 5 5" stroke="#fff" stroke-width="1.4" fill="none"/></svg>
<svg class="a" style="left:842px;top:545px" width="12" height="7"><path d="M1 1l5 5 5-5" stroke="#fff" stroke-width="1.4" fill="none"/></svg>
<div class="btn" style="left:765px;top:559px;width:26px;height:27px"></div>
<svg class="a ic" style="left:771px;top:565px" width="14" height="14"><use href="#plus"/></svg>
<svg class="a ic" style="left:804px;top:564px" width="15" height="16"><use href="#trash"/></svg>
<svg class="a ic" style="left:842px;top:564px" width="6" height="16"><use href="#dots"/></svg>

<!-- Controls -->
<div class="dock" style="left:868px;width:203px"><div class="hdr"><span>控制按钮</span></div></div>
<div class="cbtn" style="left:875px;top:494px">开始直播</div>
<div class="cbtn" style="left:875px;top:529px">开始录制</div>
<div class="cbtn" style="left:875px;top:565px;width:153px">启动虚拟摄像机</div>
<div class="btn" style="left:1032px;top:565px;width:32px;height:31px"></div>
<svg class="a ic" style="left:1040px;top:572px" width="16" height="16"><use href="#gear"/></svg>
<div class="cbtn" style="left:875px;top:600px">工作室模式</div>
<div class="cbtn" style="left:875px;top:635px">设置</div>
<div class="cbtn" style="left:875px;top:671px">退出</div>

<div id="status" class="a"></div>
<div class="a" style="left:638px;top:715px;width:1px;height:27px;background:#2e313b"></div>
<div class="a" style="left:670px;top:715px;width:1px;height:27px;background:#2e313b"></div>
<div class="a" style="left:760px;top:715px;width:1px;height:27px;background:#2e313b"></div>
<div class="a" style="left:848px;top:715px;width:1px;height:27px;background:#2e313b"></div>
<div class="a" style="left:927px;top:715px;width:1px;height:27px;background:#2e313b"></div>
<svg class="a" style="left:646px;top:721px" width="16" height="15"><g fill="#4a4d58"><rect x="0" y="11" width="3" height="4" rx="1"/><rect x="4.3" y="8" width="3" height="7" rx="1"/><rect x="8.6" y="4" width="3" height="11" rx="1"/><rect x="12.9" y="0" width="3" height="15" rx="1"/></g></svg>
<svg class="a" style="left:679px;top:722px" width="16" height="14"><g fill="none" stroke="#555862" stroke-width="1.3"><path d="M4.5 3.5a5 5 0 0 0 0 7M11.5 3.5a5 5 0 0 1 0 7"/><path d="M2.5 1.5a8 8 0 0 0 0 11M13.5 1.5a8 8 0 0 1 0 11"/></g><circle cx="8" cy="7" r="2.3" fill="#9a9ca6"/></svg>
<span class="t" style="left:701px;top:722px;color:#8d909b;font-size:12.5px">00:00:00</span>
<div class="a" style="left:770px;top:721px;width:14px;height:14px;border-radius:7px;background:#5a5d69"></div>
<span class="t" style="left:790px;top:722px;color:#8d909b;font-size:12.5px">00:00:00</span>
<span class="t" style="left:859px;top:722px;color:#dedfe4;font-size:12.5px">CPU: 1.6%</span>
<span class="t" style="left:936px;top:722px;color:#dedfe4;font-size:12.5px">60.00 / 60.00 FPS</span>
<svg class="a" style="left:1058px;top:730px" width="10" height="10"><g fill="#8a8d98"><rect x="7" y="1" width="2" height="2"/><rect x="4" y="4" width="2" height="2"/><rect x="7" y="4" width="2" height="2"/><rect x="1" y="7" width="2" height="2"/><rect x="4" y="7" width="2" height="2"/><rect x="7" y="7" width="2" height="2"/></g></svg>

</div>
<svg class="a" style="left:358.5px;top:51px" width="5" height="6"><path d="M0.5 0.5v4.5l1.2-1 1 1.8.8-.4-.9-1.7h1.6z" fill="#fff" stroke="#333" stroke-width=".3"/></svg>
</div>
</div>
<div id="vscroll" class="a"></div>
<div id="zoomrow" class="a">
  <span class="t" style="left:6px;top:1.5px">37%</span>
  <div class="a" style="left:35px;top:0;width:1px;height:14px;background:#2a2d37"></div>
  <span class="t" style="left:43px;top:1.5px">缩放至窗口</span>
  <div class="a" style="left:142px;top:0;width:1px;height:14px;background:#2a2d37"></div>
  <div class="a" style="left:165px;top:0;width:1px;height:14px;background:#2a2d37"></div>
  <svg class="a" style="left:149px;top:5px" width="10" height="6"><path d="M0.5 0.5h9L5 5.5z" fill="#fff"/></svg>
</div>

<div id="srcbar" class="a"></div>
<span class="t lt" style="left:13px;top:428px;color:#e8e8ec">未选择源</span>
<div class="a" style="left:212px;top:421px;width:71px;height:31px;border:1px solid #363946;border-radius:4px"></div>
<svg class="a" style="left:225px;top:428.5px;color:#d6d7dc" width="16" height="16"><use href="#gear"/></svg>
<span class="t" style="left:243px;top:429px;color:#9a9ca6;font-size:12.5px">设置</span>
<div class="a" style="left:289px;top:421px;width:71px;height:31px;border:1px solid #363946;border-radius:4px"></div>
<svg class="a" style="left:302px;top:429px" width="14" height="14"><use href="#filt"/></svg>
<span class="t" style="left:320px;top:429px;color:#9a9ca6;font-size:12.5px">滤镜</span>

<!-- Scenes -->
<div class="dock" style="left:4px;width:216px"><div class="hdr"><span>场景</span></div></div>
<span class="t lt" style="left:14px;top:497px">场景</span>
<div class="a" style="left:6px;top:520px;width:211px;height:28px;background:#2a4cb8;border-radius:4px"></div>
<span class="t lt" style="left:14px;top:527px;color:#f4f4f8">游戏录屏</span>
<div class="btn" style="left:8px;top:683px;width:24px;height:24px"></div>
<svg class="a ic" style="left:13px;top:687px" width="14" height="14"><use href="#plus"/></svg>
<div class="btn" style="left:37px;top:683px;width:24px;height:24px"></div>
<svg class="a ic" style="left:41px;top:686px" width="15" height="16"><use href="#trash"/></svg>
<div class="a" style="left:64px;top:685px;width:1px;height:18px;background:#1c1e26"></div>
<div class="btn" style="left:71px;top:683px;width:24px;height:24px"></div>
<svg class="a" style="left:76px;top:687px" width="14" height="14"><use href="#filt"/></svg>
<div class="a" style="left:99px;top:685px;width:1px;height:18px;background:#1c1e26"></div>
<div class="btn" style="left:105px;top:683px;width:24px;height:24px"></div>
<svg class="a ic" style="left:110px;top:690px" width="14" height="9"><use href="#up"/></svg>
<div class="btn" style="left:134px;top:683px;width:24px;height:24px"></div>
<svg class="a ic" style="left:139px;top:690px" width="14" height="9"><use href="#down"/></svg>

<!-- Sources -->
<div class="dock" style="left:224px;width:217px"><div class="hdr"><span>源</span></div></div>
<svg class="a ic" style="left:235px;top:498px" width="16" height="16"><use href="#brow"/></svg>
<span class="t lt" style="left:253px;top:498px">浏览器</span>
<svg class="a ic" style="left:384px;top:499px" width="16" height="13"><use href="#eye"/></svg>
<svg class="a" style="left:412px;top:497px;color:#9e9d99" width="13" height="17"><use href="#lock"/></svg>
<svg class="a ic" style="left:235px;top:530px" width="16" height="16"><use href="#mon"/></svg>
<span class="t lt" style="left:253px;top:530px">显示器采集</span>
<svg class="a ic" style="left:384px;top:531px" width="16" height="13"><use href="#eye"/></svg>
<svg class="a" style="left:412px;top:529px;color:#9e9d99" width="13" height="17"><use href="#lock"/></svg>
<div class="btn" style="left:229px;top:683px;width:24px;height:24px"></div>
<svg class="a ic" style="left:234px;top:687px" width="14" height="14"><use href="#plus"/></svg>
<svg class="a" style="left:262px;top:686px;color:#b5b6bc" width="15" height="16"><use href="#trash"/></svg>
<div class="a" style="left:286px;top:685px;width:1px;height:18px;background:#1c1e26"></div>
<svg class="a" style="left:296px;top:687px;color:#c4c5ca" width="15" height="15"><use href="#gear"/></svg>
<div class="a" style="left:320px;top:685px;width:1px;height:18px;background:#1c1e26"></div>
<svg class="a" style="left:331px;top:690px;color:#c4c5ca" width="14" height="9"><use href="#up"/></svg>
<svg class="a" style="left:360px;top:690px;color:#c4c5ca" width="14" height="9"><use href="#down"/></svg>

<!-- Mixer -->
<div class="dock" style="left:444px;width:282px"><div class="hdr"><span>混音器</span></div></div>
<div class="a" style="left:445px;top:562px;width:280px;height:1px;background:#30333e"></div>
<div class="a" style="left:445px;top:638px;width:280px;height:42px;background:#1e2029;border-top:1px solid #30333e;border-bottom:1px solid #30333e"></div>
<span class="t lt" style="left:452px;top:490px">麦克风/Aux</span>
<span class="t db" style="left:650px;top:492px;width:67px;text-align:right">0.0 dB</span>
<div class="btn" style="left:452px;top:509px;width:24px;height:24px"></div>
<svg class="a ic" style="left:461px;top:513px" width="6" height="17"><use href="#dots"/></svg>
<div class="btn" style="left:452px;top:535px;width:24px;height:23px"></div>
<svg class="a ic" style="left:455.5px;top:539px" width="17" height="16"><use href="#spk"/></svg>
<div class="a" style="left:482px;top:509px;width:3px;height:7px;background:#e6b022"></div>
<div class="a" style="left:482px;top:517px;width:3px;height:7px;background:#e6b022"></div>
<div class="a" style="left:487px;top:509px;width:154px;height:7px;background:#3bcd49"></div>
<div class="a" style="left:641px;top:509px;width:36.5px;height:7px;background:#e6b022"></div>
<div class="a" style="left:677.5px;top:509px;width:2.5px;height:7px;background:#6c5b0c"></div>
<div class="a" style="left:680px;top:509px;width:3px;height:7px;background:#e8405c"></div>
<div class="a" style="left:683px;top:509px;width:35px;height:7px;background:#7b1424"></div>
<div class="a" style="left:487px;top:517px;width:154px;height:7px;background:#3bcd49"></div>
<div class="a" style="left:641px;top:517px;width:34px;height:7px;background:#e6b022"></div>
<div class="a" style="left:675px;top:517px;width:1px;height:7px;background:#6c5b0c"></div>
<div class="a" style="left:676px;top:517px;width:4px;height:7px;background:#e6b022"></div>
<div class="a" style="left:680px;top:517px;width:3px;height:7px;background:#6c5b0c"></div>
<div class="a" style="left:683px;top:517px;width:35px;height:7px;background:#7b1424"></div>
<div class="a" style="left:571px;top:509px;width:3px;height:15px;background:#000"></div>
<div class="a" style="left:486.1px;top:524px;width:1px;height:3px;background:#d0d1d6"></div>
<span class="t sc" style="left:467.4px;top:525px">-60</span>
<div class="a" style="left:505.3px;top:524px;width:1px;height:3px;background:#d0d1d6"></div>
<span class="t sc" style="left:486.6px;top:525px">-55</span>
<div class="a" style="left:524.4px;top:524px;width:1px;height:3px;background:#d0d1d6"></div>
<span class="t sc" style="left:505.7px;top:525px">-50</span>
<div class="a" style="left:543.6px;top:524px;width:1px;height:3px;background:#d0d1d6"></div>
<span class="t sc" style="left:524.9px;top:525px">-45</span>
<div class="a" style="left:562.8px;top:524px;width:1px;height:3px;background:#d0d1d6"></div>
<span class="t sc" style="left:544.1px;top:525px">-40</span>
<div class="a" style="left:582.0px;top:524px;width:1px;height:3px;background:#d0d1d6"></div>
<span class="t sc" style="left:563.3px;top:525px">-35</span>
<div class="a" style="left:601.1px;top:524px;width:1px;height:3px;background:#d0d1d6"></div>
<span class="t sc" style="left:582.4px;top:525px">-30</span>
<div class="a" style="left:620.3px;top:524px;width:1px;height:3px;background:#d0d1d6"></div>
<span class="t sc" style="left:601.6px;top:525px">-25</span>
<div class="a" style="left:639.5px;top:524px;width:1px;height:3px;background:#d0d1d6"></div>
<span class="t sc" style="left:620.8px;top:525px">-20</span>
<div class="a" style="left:658.6px;top:524px;width:1px;height:3px;background:#d0d1d6"></div>
<span class="t sc" style="left:639.9px;top:525px">-15</span>
<div class="a" style="left:677.8px;top:524px;width:1px;height:3px;background:#d0d1d6"></div>
<span class="t sc" style="left:659.1px;top:525px">-10</span>
<div class="a" style="left:697.0px;top:524px;width:1px;height:3px;background:#d0d1d6"></div>
<span class="t sc" style="left:678.3px;top:525px">-5</span>
<div class="a" style="left:716.1px;top:524px;width:1px;height:3px;background:#d0d1d6"></div>
<span class="t sc" style="left:697.4px;top:525px">0</span>
<div class="a" style="left:481.5px;top:551px;width:230px;height:4.5px;background:#4a74dc;border-radius:2px"></div>
<div class="a" style="left:495.4px;top:548px;width:1px;height:11px;background:#6e717c"></div>
<div class="a" style="left:504.2px;top:548px;width:1px;height:11px;background:#6e717c"></div>
<div class="a" style="left:513.0px;top:548px;width:1px;height:11px;background:#6e717c"></div>
<div class="a" style="left:523.9px;top:548px;width:1px;height:11px;background:#6e717c"></div>
<div class="a" style="left:537.0px;top:548px;width:1px;height:11px;background:#6e717c"></div>
<div class="a" style="left:551.6px;top:548px;width:1px;height:11px;background:#6e717c"></div>
<div class="a" style="left:569.9px;top:548px;width:1px;height:11px;background:#6e717c"></div>
<div class="a" style="left:595.7px;top:548px;width:1px;height:11px;background:#6e717c"></div>
<div class="a" style="left:631.8px;top:548px;width:1px;height:11px;background:#6e717c"></div>
<div class="a" style="left:698px;top:548px;width:20px;height:10px;background:#fff;border-radius:5px"></div>
<span class="t lt" style="left:452px;top:566px">桌面音频</span>
<span class="t db" style="left:650px;top:568px;width:67px;text-align:right">0.0 dB</span>
<div class="btn" style="left:452px;top:585px;width:24px;height:23px"></div>
<svg class="a ic" style="left:461px;top:588px" width="6" height="17"><use href="#dots"/></svg>
<div class="btn" style="left:452px;top:611px;width:24px;height:23px"></div>
<svg class="a ic" style="left:455.5px;top:614.5px" width="17" height="16"><use href="#spk"/></svg>
<div class="a" style="left:482px;top:585px;width:3px;height:7px;background:#1b6a20"></div>
<div class="a" style="left:487px;top:585px;width:154px;height:7px;background:#1b6a20"></div>
<div class="a" style="left:641px;top:585px;width:42px;height:7px;background:#6f5412"></div>
<div class="a" style="left:683px;top:585px;width:35px;height:7px;background:#7b1424"></div>
<div class="a" style="left:482px;top:593px;width:3px;height:7px;background:#1b6a20"></div>
<div class="a" style="left:487px;top:593px;width:154px;height:7px;background:#1b6a20"></div>
<div class="a" style="left:641px;top:593px;width:42px;height:7px;background:#6f5412"></div>
<div class="a" style="left:683px;top:593px;width:35px;height:7px;background:#7b1424"></div>
<div class="a" style="left:486.1px;top:600px;width:1px;height:3px;background:#d0d1d6"></div>
<span class="t sc" style="left:467.4px;top:601px">-60</span>
<div class="a" style="left:505.3px;top:600px;width:1px;height:3px;background:#d0d1d6"></div>
<span class="t sc" style="left:486.6px;top:601px">-55</span>
<div class="a" style="left:524.4px;top:600px;width:1px;height:3px;background:#d0d1d6"></div>
<span class="t sc" style="left:505.7px;top:601px">-50</span>
<div class="a" style="left:543.6px;top:600px;width:1px;height:3px;background:#d0d1d6"></div>
<span class="t sc" style="left:524.9px;top:601px">-45</span>
<div class="a" style="left:562.8px;top:600px;width:1px;height:3px;background:#d0d1d6"></div>
<span class="t sc" style="left:544.1px;top:601px">-40</span>
<div class="a" style="left:582.0px;top:600px;width:1px;height:3px;background:#d0d1d6"></div>
<span class="t sc" style="left:563.3px;top:601px">-35</span>
<div class="a" style="left:601.1px;top:600px;width:1px;height:3px;background:#d0d1d6"></div>
<span class="t sc" style="left:582.4px;top:601px">-30</span>
<div class="a" style="left:620.3px;top:600px;width:1px;height:3px;background:#d0d1d6"></div>
<span class="t sc" style="left:601.6px;top:601px">-25</span>
<div class="a" style="left:639.5px;top:600px;width:1px;height:3px;background:#d0d1d6"></div>
<span class="t sc" style="left:620.8px;top:601px">-20</span>
<div class="a" style="left:658.6px;top:600px;width:1px;height:3px;background:#d0d1d6"></div>
<span class="t sc" style="left:639.9px;top:601px">-15</span>
<div class="a" style="left:677.8px;top:600px;width:1px;height:3px;background:#d0d1d6"></div>
<span class="t sc" style="left:659.1px;top:601px">-10</span>
<div class="a" style="left:697.0px;top:600px;width:1px;height:3px;background:#d0d1d6"></div>
<span class="t sc" style="left:678.3px;top:601px">-5</span>
<div class="a" style="left:716.1px;top:600px;width:1px;height:3px;background:#d0d1d6"></div>
<span class="t sc" style="left:697.4px;top:601px">0</span>
<div class="a" style="left:481.5px;top:627px;width:230px;height:4.5px;background:#4a74dc;border-radius:2px"></div>
<div class="a" style="left:495.4px;top:624px;width:1px;height:11px;background:#6e717c"></div>
<div class="a" style="left:504.2px;top:624px;width:1px;height:11px;background:#6e717c"></div>
<div class="a" style="left:513.0px;top:624px;width:1px;height:11px;background:#6e717c"></div>
<div class="a" style="left:523.9px;top:624px;width:1px;height:11px;background:#6e717c"></div>
<div class="a" style="left:537.0px;top:624px;width:1px;height:11px;background:#6e717c"></div>
<div class="a" style="left:551.6px;top:624px;width:1px;height:11px;background:#6e717c"></div>
<div class="a" style="left:569.9px;top:624px;width:1px;height:11px;background:#6e717c"></div>
<div class="a" style="left:595.7px;top:624px;width:1px;height:11px;background:#6e717c"></div>
<div class="a" style="left:631.8px;top:624px;width:1px;height:11px;background:#6e717c"></div>
<div class="a" style="left:698px;top:624px;width:20px;height:10px;background:#fff;border-radius:5px"></div>
<div class="btn" style="left:449px;top:682px;width:25px;height:25px"></div>
<svg class="a ic" style="left:452.2px;top:689.4px" width="12.5" height="12.5"><use href="#gear"/></svg>
<svg class="a ic" style="left:461.4px;top:686.6px" width="8.4" height="8.4"><use href="#gear"/></svg>
<div class="a" style="left:477px;top:685px;width:2px;height:20px;background:#1e2029"></div>
<div class="btn" style="left:484px;top:682px;width:24px;height:25px"></div>
<svg class="a ic" style="left:493px;top:686px" width="6" height="17"><use href="#dots"/></svg>

<!-- Transitions -->
<div class="dock" style="left:730px;width:134px"><div class="hdr"><span>转场动画</span></div></div>
<div class="btn" style="left:735px;top:494px;width:124px;height:29px"></div>
<div class="a" style="left:836px;top:494px;width:1px;height:29px;background:#2b2d37"></div>
<span class="t lt" style="left:745px;top:501px;letter-spacing:0.5px;color:#dcdce2">淡入淡出</span>
<svg class="a" style="left:842px;top:506px" width="12" height="7"><path d="M0 0h12L6 6.5z" fill="#fff"/></svg>
<span class="t lt" style="left:734px;top:535px;letter-spacing:1px;color:#dcdce2">时长</span>
<div class="btn" style="left:764px;top:527px;width:95px;height:30px"></div>
<div class="a" style="left:836px;top:527px;width:1px;height:30px;background:#2b2d37"></div>
<div class="a" style="left:837px;top:541px;width:22px;height:1px;background:#2b2d37"></div>
<span class="t" style="left:775px;top:534px;color:#e8e8ec;font-size:13px">300 ms</span>
<svg class="a" style="left:842px;top:531px" width="12" height="7"><path d="M1 6l5-5 5 5" stroke="#fff" stroke-width="1.4" fill="none"/></svg>
<svg class="a" style="left:842px;top:545px" width="12" height="7"><path d="M1 1l5 5 5-5" stroke="#fff" stroke-width="1.4" fill="none"/></svg>
<div class="btn" style="left:765px;top:559px;width:26px;height:27px"></div>
<svg class="a ic" style="left:771px;top:565px" width="14" height="14"><use href="#plus"/></svg>
<svg class="a ic" style="left:804px;top:564px" width="15" height="16"><use href="#trash"/></svg>
<svg class="a ic" style="left:842px;top:564px" width="6" height="16"><use href="#dots"/></svg>

<!-- Controls -->
<div class="dock" style="left:868px;width:203px"><div class="hdr"><span>控制按钮</span></div></div>
<div class="cbtn" style="left:875px;top:494px">开始直播</div>
<div class="cbtn" style="left:875px;top:529px">开始录制</div>
<div class="cbtn" style="left:875px;top:565px;width:153px">启动虚拟摄像机</div>
<div class="btn" style="left:1032px;top:565px;width:32px;height:31px"></div>
<svg class="a ic" style="left:1040px;top:572px" width="16" height="16"><use href="#gear"/></svg>
<div class="cbtn" style="left:875px;top:600px">工作室模式</div>
<div class="cbtn" style="left:875px;top:635px">设置</div>
<div class="cbtn" style="left:875px;top:671px">退出</div>

<div id="status" class="a"></div>
<div class="a" style="left:638px;top:715px;width:1px;height:27px;background:#2e313b"></div>
<div class="a" style="left:670px;top:715px;width:1px;height:27px;background:#2e313b"></div>
<div class="a" style="left:760px;top:715px;width:1px;height:27px;background:#2e313b"></div>
<div class="a" style="left:848px;top:715px;width:1px;height:27px;background:#2e313b"></div>
<div class="a" style="left:927px;top:715px;width:1px;height:27px;background:#2e313b"></div>
<svg class="a" style="left:646px;top:721px" width="16" height="15"><g fill="#4a4d58"><rect x="0" y="11" width="3" height="4" rx="1"/><rect x="4.3" y="8" width="3" height="7" rx="1"/><rect x="8.6" y="4" width="3" height="11" rx="1"/><rect x="12.9" y="0" width="3" height="15" rx="1"/></g></svg>
<svg class="a" style="left:679px;top:722px" width="16" height="14"><g fill="none" stroke="#555862" stroke-width="1.3"><path d="M4.5 3.5a5 5 0 0 0 0 7M11.5 3.5a5 5 0 0 1 0 7"/><path d="M2.5 1.5a8 8 0 0 0 0 11M13.5 1.5a8 8 0 0 1 0 11"/></g><circle cx="8" cy="7" r="2.3" fill="#9a9ca6"/></svg>
<span class="t" style="left:701px;top:722px;color:#8d909b;font-size:12.5px">00:00:00</span>
<div class="a" style="left:770px;top:721px;width:14px;height:14px;border-radius:7px;background:#5a5d69"></div>
<span class="t" style="left:790px;top:722px;color:#8d909b;font-size:12.5px">00:00:00</span>
<span class="t" style="left:859px;top:722px;color:#dedfe4;font-size:12.5px">CPU: 1.6%</span>
<span class="t" style="left:936px;top:722px;color:#dedfe4;font-size:12.5px">60.00 / 60.00 FPS</span>
<svg class="a" style="left:1058px;top:730px" width="10" height="10"><g fill="#8a8d98"><rect x="7" y="1" width="2" height="2"/><rect x="4" y="4" width="2" height="2"/><rect x="7" y="4" width="2" height="2"/><rect x="1" y="7" width="2" height="2"/><rect x="4" y="7" width="2" height="2"/><rect x="7" y="7" width="2" height="2"/></g></svg>

<div class="a" style="left:1071px;top:0;width:9px;height:38px;background:#f1f2f5"></div>
<svg class="a" style="left:1071px;top:12px" width="12" height="16"><path d="M8 1.2l2 4.6 5 .5-3.8 3.3 1.1 4.9L8 12 3.7 14.5l1.1-4.9L1 6.3l5-.5z" fill="none" stroke="#333" stroke-width="1"/></svg>
<span class="t" style="left:1068px;top:57px;font-size:14px;color:#2f4366;font-weight:bold">放</span>
<div class="a" style="left:1071px;top:74px;width:9px;height:1.5px;background:#5a6b8a"></div>
<div class="a" style="left:0;top:742px;width:1080px;height:3px;background:linear-gradient(90deg,#e4e7ec 0,#e8ebf0 60%,#d8e0ee 100%)"></div>
<!-- watermark -->
<svg class="a" style="left:723px;top:682px" width="46" height="36" viewBox="0 0 46 36">
<g fill="#a8a9ad" opacity="0.92">
<ellipse cx="16.5" cy="13.7" rx="14.3" ry="12"/>
<path d="M6 21 L5.5 28 L13 24z"/>
</g>
<ellipse cx="30.8" cy="21.7" rx="13.2" ry="10.7" fill="#23252d"/>
<g fill="#a8a9ad">
<ellipse cx="30.8" cy="21.7" rx="12.2" ry="9.8"/>
<path d="M36 29 L38.5 34.5 L32 31z"/>
</g>
<g fill="#2a2c34"><circle cx="12" cy="10.2" r="1.7"/><circle cx="22" cy="10.2" r="1.7"/><circle cx="26.6" cy="20.6" r="1.5"/><circle cx="35" cy="20.6" r="1.5"/></g>
</svg>
<span class="t wm" style="left:774px;top:682px;font-size:29px;letter-spacing:3.5px">公众号</span>
<div class="a" style="left:880px;top:700px;width:4px;height:4px;border-radius:2px;background:rgba(210,210,214,0.62)"></div>
<span class="t wm" style="left:900px;top:684px;font-size:30px;letter-spacing:1.5px">Ctrl+Tools</span>

</body></html>
